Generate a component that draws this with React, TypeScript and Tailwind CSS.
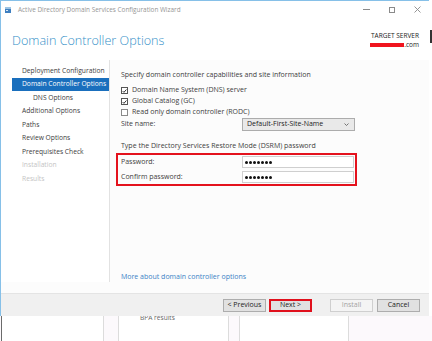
import React from "react";

const navItems = [
  { label: "Deployment Configuration", state: "normal" },
  { label: "Domain Controller Options", state: "selected" },
  { label: "DNS Options", state: "sub" },
  { label: "Additional Options", state: "normal" },
  { label: "Paths", state: "normal" },
  { label: "Review Options", state: "normal" },
  { label: "Prerequisites Check", state: "normal" },
  { label: "Installation", state: "disabled" },
  { label: "Results", state: "disabled" },
];

const Check = ({ checked }: { checked: boolean }) => (
  <div
    className={`w-[7px] h-[7px] border bg-white flex items-center justify-center ${
      checked ? "border-[#555]" : "border-[#8a8a8a]"
    }`}
  >
    {checked && (
      <svg width="6" height="6" viewBox="0 0 6 6">
        <path d="M0.8 3.1 L2.3 4.6 L5.3 1.2" stroke="#222" strokeWidth="1.1" fill="none" />
      </svg>
    )}
  </div>
);

const Dots = () => (
  <div className="flex gap-[1px] pl-[2px]">
    {Array.from({ length: 7 }).map((_, i) => (
      <span key={i} className="w-[3px] h-[3px] rounded-full bg-[#111]" />
    ))}
  </div>
);

const Btn = ({ label, disabled, hot }: { label: string; disabled?: boolean; hot?: boolean }) => (
  <div
    className={`h-[13px] w-[43px] flex items-center justify-center text-[7px] border ${
      disabled
        ? "bg-[#f4f4f4] border-[#cfcfcf] text-[#a3a3a3]"
        : hot
        ? "bg-[#e1e1e1] border-[#e0101c] border-2 text-[#222]"
        : "bg-[#e1e1e1] border-[#adadad] text-[#222]"
    }`}
  >
    {label}
  </div>
);

const App = () => {
  return (
    <div className="w-[432px] h-[341px] overflow-hidden bg-white flex flex-col font-['Open_Sans','Liberation_Sans',sans-serif] text-[#3c3c3c]">
      <div className="flex h-[316px]">
        {/* wizard window */}
        <div className="w-[429px] h-full flex flex-col border-l border-t border-[#86c0e8] bg-[#fcfcfc]">
          {/* title bar */}
          <div className="h-[17px] flex items-center bg-white">
            <svg width="6" height="6" viewBox="0 0 6 6" className="ml-[4px]">
              <rect x="0" y="0" width="6" height="2" fill="#9cc4e4" />
              <rect x="0" y="2" width="6" height="4" fill="#3e7fc0" />
              <rect x="1" y="3" width="2" height="1" fill="#d9e8f5" />
            </svg>
            <span className="ml-[7px] text-[6.4px] text-[#959595]">
              Active Directory Domain Services Configuration Wizard
            </span>
            <div className="ml-auto flex items-center gap-[19px] pr-[8px]">
              <div className="w-[7px] h-px bg-[#8a8a8a]" />
              <div className="w-[6px] h-[6px] border border-[#8a8a8a]" />
              <svg width="7" height="7" viewBox="0 0 7 7">
                <path d="M0.5 0.5 L6.5 6.5 M6.5 0.5 L0.5 6.5" stroke="#8a8a8a" strokeWidth="0.9" />
              </svg>
            </div>
          </div>

          {/* header */}
          <div className="h-[42px] flex items-start bg-white">
            <h1 className="ml-[11px] mt-[15px] text-[12.6px] leading-[16px] font-light text-[#3490c8]">
              Domain Controller Options
            </h1>
            <div className="ml-auto mr-[10px] mt-[13px] flex flex-col items-end text-[6.5px] leading-[9px] text-[#1a1a1a]">
              <span>TARGET SERVER</span>
              <div className="flex items-center">
                <div className="w-[34px] h-[4px] bg-[#f0141e]" />
                <span>.com</span>
              </div>
            </div>
          </div>

          {/* body */}
          <div className="h-[233px] flex">
            <div className="w-[109px] h-[222px] border-r border-[#e2e2e2] pt-[4px] pl-[11px] bg-white">
              {navItems.map((item) => (
                <div
                  key={item.label}
                  className={`h-[13.5px] flex items-center text-[6.7px] whitespace-nowrap ${
                    item.state === "selected"
                      ? "bg-[#1a6fbd] text-white pl-[10px]"
                      : item.state === "sub"
                      ? "pl-[21px]"
                      : item.state === "disabled"
                      ? "pl-[10px] text-[#c4c4c4]"
                      : "pl-[10px]"
                  }`}
                >
                  {item.label}
                </div>
              ))}
            </div>

            <div className="flex-1 flex flex-col pl-[11px] pt-[10px] text-[7px]">
              <div className="h-[11px] flex items-center">
                Specify domain controller capabilities and site information
              </div>
              <div className="mt-[4px] flex flex-col">
                <div className="h-[11px] flex items-center gap-[4px]">
                  <Check checked />
                  <span>Domain Name System (DNS) server</span>
                </div>
                <div className="h-[11px] flex items-center gap-[4px]">
                  <Check checked />
                  <span>Global Catalog (GC)</span>
                </div>
                <div className="h-[11px] flex items-center gap-[4px]">
                  <Check checked={false} />
                  <span>Read only domain controller (RODC)</span>
                </div>
              </div>
              <div className="h-[13px] flex items-center">
                <span className="w-[121px]">Site name:</span>
                <div className="w-[113px] h-[13px] border border-[#acacac] bg-[#e9e9e9] flex items-center pl-[4px] pr-[5px]">
                  <span className="text-[#222]">Default-First-Site-Name</span>
                  <svg width="5" height="3" viewBox="0 0 5 3" className="ml-auto">
                    <path d="M0.5 0.5 L2.5 2.5 L4.5 0.5" stroke="#555" strokeWidth="0.8" fill="none" />
                  </svg>
                </div>
              </div>
              <div className="mt-[10px] h-[11px] flex items-center">
                Type the Directory Services Restore Mode (DSRM) password
              </div>
              <div className="mt-[1px] -ml-[5px] w-[241px] h-[33px] border-2 border-[#e4121d] flex flex-col pl-[3px] pr-[1px] pt-px gap-[3px]">
                <div className="h-[12px] flex items-center">
                  <span className="w-[121px]">Password:</span>
                  <div className="w-[112px] h-[12px] border border-[#cfcfcf] bg-white flex items-center">
                    <Dots />
                  </div>
                </div>
                <div className="h-[12px] flex items-center">
                  <span className="w-[121px]">Confirm password:</span>
                  <div className="w-[112px] h-[12px] border border-[#cfcfcf] bg-white flex items-center">
                    <Dots />
                  </div>
                </div>
              </div>
              <div className="mt-auto mb-[10px] h-[11px] flex items-center text-[#3b83c6]">
                More about domain controller options
              </div>
            </div>
          </div>

          {/* footer */}
          <div className="flex-1 bg-[#f0f0f0] border-t border-[#e4e4e4] flex items-center pr-[9px]">
            <div className="ml-auto flex items-center">
              <Btn label="< Previous" />
              <div className="ml-[3px]">
                <Btn label="Next >" hot />
              </div>
              <div className="ml-[18px]">
                <Btn label="Install" disabled />
              </div>
              <div className="ml-[4px]">
                <Btn label="Cancel" />
              </div>
            </div>
          </div>
        </div>
        <div className="w-[3px] flex flex-col">
          <div className="mt-[30px] h-[13px] w-[2px] ml-[1px] bg-[#333]" />
        </div>
      </div>

      {/* background window behind the wizard */}
      <div className="flex-1 flex bg-[#fcf9fc] text-[6.6px] text-[#666]">
        <div className="w-[103px] ml-px border-l border-[#6b6b6b] border-r border-r-[#dcdcdc] bg-white" />
        <div className="w-[14px]" />
        <div className="w-[111px] border-l border-r border-[#dcdcdc] bg-white overflow-hidden">
          <div className="ml-[21px] -mt-[3px] leading-[9px]">BPA results</div>
        </div>
        <div className="w-[10px]" />
        <div className="w-[110px] border-l border-r border-[#dcdcdc] bg-white" />
        <div className="flex-1" />
      </div>
    </div>
  );
};

export default App;
